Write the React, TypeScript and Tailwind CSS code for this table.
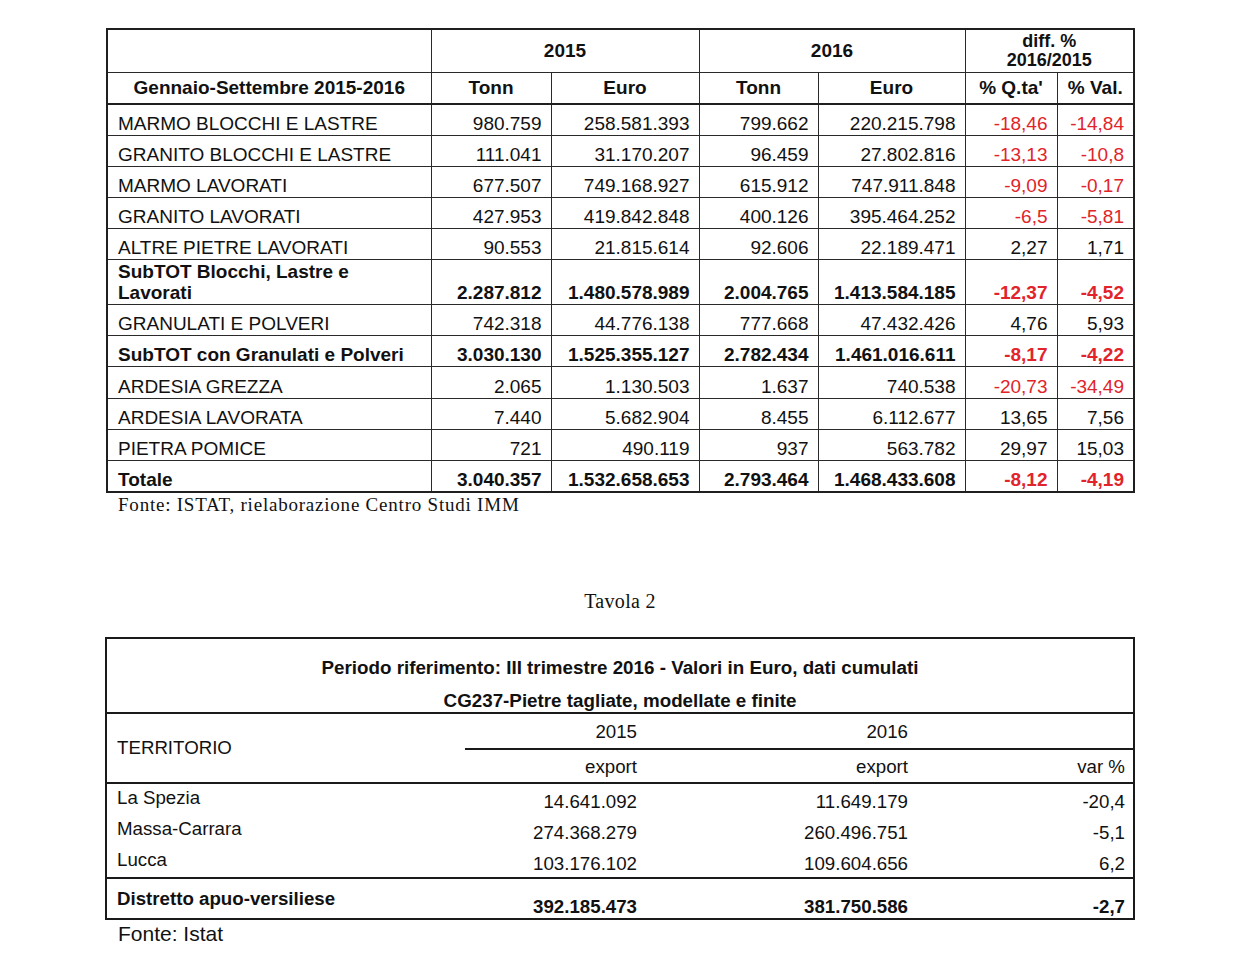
import React from "react";

type Row = {
  label: string;
  v: string[];
  bold?: boolean;
  two?: boolean;
  red?: boolean;
  h: string;
};

const rows: Row[] = [
  { label: "MARMO BLOCCHI E LASTRE", v: ["980.759", "258.581.393", "799.662", "220.215.798", "-18,46", "-14,84"], red: true, h: "h-[31px]" },
  { label: "GRANITO BLOCCHI E LASTRE", v: ["111.041", "31.170.207", "96.459", "27.802.816", "-13,13", "-10,8"], red: true, h: "h-[31px]" },
  { label: "MARMO LAVORATI", v: ["677.507", "749.168.927", "615.912", "747.911.848", "-9,09", "-0,17"], red: true, h: "h-[31px]" },
  { label: "GRANITO LAVORATI", v: ["427.953", "419.842.848", "400.126", "395.464.252", "-6,5", "-5,81"], red: true, h: "h-[31px]" },
  { label: "ALTRE PIETRE LAVORATI", v: ["90.553", "21.815.614", "92.606", "22.189.471", "2,27", "1,71"], h: "h-[31px]" },
  { label: "SubTOT Blocchi, Lastre e Lavorati", two: true, bold: true, v: ["2.287.812", "1.480.578.989", "2.004.765", "1.413.584.185", "-12,37", "-4,52"], red: true, h: "h-[45px]" },
  { label: "GRANULATI E POLVERI", v: ["742.318", "44.776.138", "777.668", "47.432.426", "4,76", "5,93"], h: "h-[31px]" },
  { label: "SubTOT con Granulati e Polveri", bold: true, v: ["3.030.130", "1.525.355.127", "2.782.434", "1.461.016.611", "-8,17", "-4,22"], red: true, h: "h-[31px]" },
  { label: "ARDESIA GREZZA", v: ["2.065", "1.130.503", "1.637", "740.538", "-20,73", "-34,49"], red: true, h: "h-[32px]" },
  { label: "ARDESIA LAVORATA", v: ["7.440", "5.682.904", "8.455", "6.112.677", "13,65", "7,56"], h: "h-[31px]" },
  { label: "PIETRA POMICE", v: ["721", "490.119", "937", "563.782", "29,97", "15,03"], h: "h-[31px]" },
  { label: "Totale", bold: true, v: ["3.040.357", "1.532.658.653", "2.793.464", "1.468.433.608", "-8,12", "-4,19"], red: true, h: "h-[32px]" },
];

const cell = "border border-[#2a2a2a]";
const hb = "border-b-2 border-b-[#1f1f1f]";

function Table1() {
  return (
    <table className="ml-[106px] w-[1027px] table-fixed border-collapse border-2 border-[#1f1f1f] font-['Liberation_Sans',Arial,sans-serif] text-[19px] text-[#111]">
      <colgroup>
        <col className="w-[324px]" />
        <col className="w-[120px]" />
        <col className="w-[148px]" />
        <col className="w-[119px]" />
        <col className="w-[147px]" />
        <col className="w-[92px]" />
        <col className="w-[77px]" />
      </colgroup>
      <thead>
        <tr className="h-[43px] font-bold">
          <th className={cell}></th>
          <th colSpan={2} className={`${cell} text-center align-middle`}>2015</th>
          <th colSpan={2} className={`${cell} text-center align-middle`}>2016</th>
          <th colSpan={2} className={`${cell} text-center align-middle text-[18px] leading-[19px] pt-[1px]`}>
            diff. %
            <br />
            2016/2015
          </th>
        </tr>
        <tr className="h-[32px] font-bold">
          <th className={`${cell} ${hb} text-center`}>Gennaio-Settembre 2015-2016</th>
          <th className={`${cell} ${hb} text-center`}>Tonn</th>
          <th className={`${cell} ${hb} text-center`}>Euro</th>
          <th className={`${cell} ${hb} text-center`}>Tonn</th>
          <th className={`${cell} ${hb} text-center`}>Euro</th>
          <th className={`${cell} ${hb} text-center`}>% Q.ta'</th>
          <th className={`${cell} ${hb} text-center`}>% Val.</th>
        </tr>
      </thead>
      <tbody>
        {rows.map((r) => (
          <tr key={r.label} className={`${r.h} ${r.bold ? "font-bold" : ""}`}>
            <td className={`${cell} pl-[10px] align-bottom leading-[21px] pb-[1px]`}>
              {r.two ? (
                <>
                  SubTOT Blocchi, Lastre e
                  <br />
                  Lavorati
                </>
              ) : (
                r.label
              )}
            </td>
            {r.v.map((x, i) => (
              <td
                key={i}
                className={`${cell} pr-[9px] text-right align-bottom leading-[21px] pb-[1px] ${
                  i >= 4 && r.red ? "text-[#e1242a]" : ""
                }`}
              >
                {x}
              </td>
            ))}
          </tr>
        ))}
      </tbody>
    </table>
  );
}

const data2 = [
  { label: "La Spezia", a: "14.641.092", b: "11.649.179", c: "-20,4" },
  { label: "Massa-Carrara", a: "274.368.279", b: "260.496.751", c: "-5,1" },
  { label: "Lucca", a: "103.176.102", b: "109.604.656", c: "6,2" },
];

function Table2() {
  const cols = "grid grid-cols-[358px_182px_271px_1fr]";
  return (
    <div className="ml-[105px] w-[1030px] border-2 border-[#1a1a1a] font-['Liberation_Sans',Arial,sans-serif] text-[18.7px] text-[#111]">
      <div className="h-[73px] flex flex-col items-center pt-[18px] gap-[11px] font-bold leading-[22px] text-[18.8px]">
        <div>Periodo riferimento: III trimestre 2016 - Valori in Euro, dati cumulati</div>
        <div>CG237-Pietre tagliate, modellate e finite</div>
      </div>
      <div className={`${cols} border-t-2 border-[#1a1a1a] grid-rows-[36px_32px]`}>
        <div className="row-span-2 flex items-center pl-[10px] pt-[1px]">TERRITORIO</div>
        <div className="border-b-2 border-[#1a1a1a] text-right pr-[10px] leading-[34px] pt-[1px]">2015</div>
        <div className="border-b-2 border-[#1a1a1a] text-right pr-[10px] leading-[34px] pt-[1px]">2016</div>
        <div className="border-b-2 border-[#1a1a1a]"></div>
        <div className="text-right pr-[10px] leading-[32px] pt-[1px]">export</div>
        <div className="text-right pr-[10px] leading-[32px] pt-[1px]">export</div>
        <div className="text-right pr-[8px] leading-[32px] pt-[1px]">var %</div>
      </div>
      <div className="border-t-2 border-[#1a1a1a]">
        {data2.map((r) => (
          <div key={r.label} className={`${cols} h-[31px]`}>
            <div className="pl-[10px] leading-[22px] pt-[3px]">{r.label}</div>
            <div className="self-end text-right pr-[10px] leading-[22px] pb-[2px]">{r.a}</div>
            <div className="self-end text-right pr-[10px] leading-[22px] pb-[2px]">{r.b}</div>
            <div className="self-end text-right pr-[8px] leading-[22px] pb-[2px]">{r.c}</div>
          </div>
        ))}
      </div>
      <div className={`${cols} h-[41px] border-t-2 border-[#1a1a1a] font-bold`}>
        <div className="self-center pl-[10px] leading-[22px]">Distretto apuo-versiliese</div>
        <div className="self-end text-right pr-[10px] leading-[22px]">392.185.473</div>
        <div className="self-end text-right pr-[10px] leading-[22px]">381.750.586</div>
        <div className="self-end text-right pr-[8px] leading-[22px]">-2,7</div>
      </div>
    </div>
  );
}

export default function App() {
  return (
    <div className="w-[1240px] h-[977px] bg-white overflow-hidden">
      <div className="pt-[28px]">
        <Table1 />
      </div>
      <div className="ml-[118px] mt-[1px] font-['Liberation_Serif','Times_New_Roman',serif] text-[19px] leading-[22px] text-[#111] tracking-[0.78px]">
        Fonte: ISTAT, rielaborazione Centro Studi IMM
      </div>
      <div className="mt-[74px] text-center font-['Liberation_Serif','Times_New_Roman',serif] text-[20px] leading-[22px] text-[#111] tracking-[0.3px]">
        Tavola 2
      </div>
      <div className="mt-[25px]">
        <Table2 />
      </div>
      <div className="ml-[118px] mt-[2px] font-['Liberation_Sans',Arial,sans-serif] text-[21px] leading-[24px] text-[#111]">
        Fonte: Istat
      </div>
    </div>
  );
}
